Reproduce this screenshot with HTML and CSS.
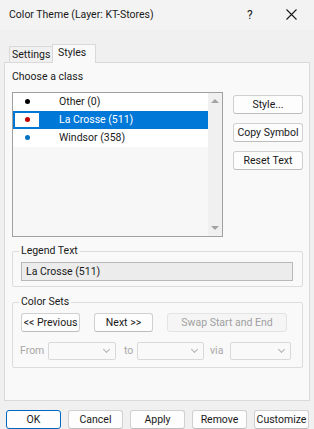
FILE: index.html
```html
<!DOCTYPE html>
<html lang="en">
<head>
    <meta charset="UTF-8">
    <meta name="viewport" content="width=device-width, initial-scale=1.0">
    <title>Color Theme</title>
    <link rel="stylesheet" href="styles.css">
</head>
<body>
    <div class="window">
        <div class="titlebar">
            <span class="title">Color Theme (Layer: KT-Stores)</span>
            <span class="help">?</span>
            <span class="close">
                <svg width="11" height="11" viewBox="0 0 11 11"><path d="M0.5 0.5 L10.5 10.5 M10.5 0.5 L0.5 10.5" stroke="#1a1a1a" stroke-width="1.1"/></svg>
            </span>
        </div>

        <div class="tabs">
            <div class="tab">Settings</div>
            <div class="tab active">Styles</div>
        </div>

        <div class="panel">
            <div class="label">Choose a class</div>
            <div class="class-area">
                <div class="listbox">
                    <div class="rows">
                        <div class="row">
                            <span class="swatch"><span class="dot black"></span></span>
                            <span>Other (0)</span>
                        </div>
                        <div class="row selected">
                            <span class="swatch"><span class="dot red"></span></span>
                            <span>La Crosse (511)</span>
                        </div>
                        <div class="row">
                            <span class="swatch"><span class="dot blue"></span></span>
                            <span>Windsor (358)</span>
                        </div>
                    </div>
                    <div class="scrollbar">
                        <span class="arrow up"></span>
                        <span class="arrow down"></span>
                    </div>
                </div>
                <div class="side-buttons">
                    <button class="btn">Style...</button>
                    <button class="btn">Copy Symbol</button>
                    <button class="btn">Reset Text</button>
                </div>
            </div>

            <div class="group legend-group">
                <span class="group-title">Legend Text</span>
                <input type="text" class="textbox" value="La Crosse (511)" disabled>
            </div>

            <div class="group sets-group">
                <span class="group-title">Color Sets</span>
                <div class="sets-buttons">
                    <button class="btn prev">&lt;&lt; Previous</button>
                    <button class="btn next">Next &gt;&gt;</button>
                    <button class="btn swap" disabled>Swap Start and End</button>
                </div>
                <div class="ramp-row">
                    <span class="muted from">From</span>
                    <span class="combo c1"><span class="chev"></span></span>
                    <span class="muted to">to</span>
                    <span class="combo c2"><span class="chev"></span></span>
                    <span class="muted via">via</span>
                    <span class="combo c3"><span class="chev"></span></span>
                </div>
            </div>
        </div>

        <div class="footer">
            <button class="btn ok">OK</button>
            <button class="btn">Cancel</button>
            <button class="btn">Apply</button>
            <button class="btn">Remove</button>
            <button class="btn">Customize</button>
        </div>
    </div>
</body>
</html>
```

FILE: styles.css
```css
body {
    margin: 0;
    padding: 0;
    background-color: #f0f0f0;
    font-family: Roboto, sans-serif;
    font-size: 10.5px;
    color: #1a1a1a;
}
.window {
    width: 314px;
    height: 429px;
    display: flex;
    flex-direction: column;
    background-color: #f0f0f0;
}
.titlebar {
    height: 30px;
    display: flex;
    align-items: center;
    padding-left: 9px;
    background-color: #f3f3f3;
}
.title {
    flex: 1;
}
.help {
    width: 14px;
    margin-right: 25px;
    font-size: 12px;
}
.close {
    width: 11px;
    height: 11px;
    margin-right: 17px;
    display: flex;
}
.tabs {
    display: flex;
    align-items: flex-end;
    height: 19px;
    margin-top: 13px;
    padding-left: 9px;
}
.tab {
    width: 43px;
    height: 17px;
    line-height: 16px;
    padding-left: 2px;
    box-sizing: border-box;
    border: 1px solid #d9d9d9;
    border-bottom: none;
    border-right: none;
    background-color: #f0f0f0;
    margin-bottom: -1px;
}
.tab.active {
    width: 44px;
    height: 19px;
    line-height: 15px;
    padding-left: 5px;
    border-right: 1px solid #d9d9d9;
    background-color: #f9f9f9;
    position: relative;
    z-index: 1;
}
.panel {
    margin: 0 4px;
    height: 333px;
    border: 1px solid #d9d9d9;
    background-color: #f9f9f9;
    padding: 6px 6px 0 7px;
}
.label {
    line-height: 16px;
    margin-bottom: 7px;
}
.class-area {
    display: flex;
    gap: 10px;
}
.listbox {
    width: 209px;
    height: 143px;
    border: 1px solid #a0a0a0;
    background-color: #f7f7f7;
    display: flex;
}
.rows {
    flex: 1;
}
.row {
    height: 18px;
    display: flex;
    align-items: center;
    background-color: #fff;
    padding-left: 2px;
}
.row.selected {
    background-color: #0078d7;
    color: #fff;
}
.swatch {
    width: 24px;
    height: 14px;
    background-color: #fff;
    display: flex;
    align-items: center;
    justify-content: center;
    margin-right: 20px;
}
.dot {
    width: 5px;
    height: 5px;
    border-radius: 50%;
}
.dot.black { background-color: #000; }
.dot.red { background-color: #c00000; }
.dot.blue { background-color: #0070c0; }
.scrollbar {
    width: 14px;
    background-color: #f0f0f0;
    display: flex;
    flex-direction: column;
    justify-content: space-between;
    align-items: center;
    padding: 6px 0;
}
.arrow {
    width: 0;
    height: 0;
    border-left: 4px solid transparent;
    border-right: 4px solid transparent;
}
.arrow.up { border-bottom: 4px solid #a3a3a3; }
.arrow.down { border-top: 4px solid #a3a3a3; }
.side-buttons {
    display: flex;
    flex-direction: column;
    gap: 9px;
    padding-top: 3px;
}
.btn {
    font-family: Roboto, sans-serif;
    font-size: 10.5px;
    color: #1a1a1a;
    height: 19px;
    padding: 0;
    white-space: nowrap;
    background-color: #fdfdfd;
    border: 1px solid #d0d0d0;
    border-bottom-color: #bdbdbd;
    border-radius: 3px;
}
.side-buttons .btn {
    width: 70px;
}
.group {
    position: relative;
    width: 291px;
    box-sizing: border-box;
    border: 1px solid #dcdcdc;
    border-radius: 2px;
}
.group-title {
    position: absolute;
    top: -9px;
    left: 6px;
    padding: 0 2px;
    background-color: #f9f9f9;
    line-height: 16px;
}
.legend-group {
    margin-top: 14px;
    height: 36px;
    padding: 10px 0 0 8px;
}
.textbox {
    width: 272px;
    height: 19px;
    box-sizing: border-box;
    border: 1px solid #b8b8b8;
    background-color: #ececec;
    font-family: Roboto, sans-serif;
    font-size: 10.5px;
    color: #1a1a1a;
    padding: 0 4px;
    margin: 0;
}
.sets-group {
    margin-top: 15px;
    height: 66px;
    padding: 10px 0 0 8px;
}
.sets-buttons {
    display: flex;
}
.prev { width: 59px; margin-right: 14px; }
.next { width: 59px; margin-right: 14px; }
.swap {
    width: 120px;
    color: #a0a0a0;
    background-color: #f5f5f5;
    border-color: #e3e3e3;
}
.ramp-row {
    display: flex;
    align-items: center;
    margin-top: 10px;
    height: 18px;
}
.muted {
    color: #a8a8a8;
}
.from { width: 28px; margin-left: -1px; }
.to { width: 13px; margin-left: 8px; }
.via { width: 20px; margin-left: 6px; }
.combo {
    height: 18px;
    box-sizing: border-box;
    border: 1px solid #d9d9d9;
    background-color: #f9f9f9;
    border-radius: 2px;
    display: flex;
    align-items: center;
    justify-content: flex-end;
    padding-right: 6px;
}
.chev {
    width: 4px;
    height: 4px;
    border-right: 1px solid #b0b0b0;
    border-bottom: 1px solid #b0b0b0;
    transform: rotate(45deg);
    margin-top: -3px;
}
.c1 { width: 68px; }
.c2 { width: 67px; }
.c3 { width: 61px; }
.footer {
    display: flex;
    gap: 7px;
    padding: 9px 0 0 6px;
}
.footer .btn {
    width: 55px;
}
.footer .btn.ok {
    border: 1px solid #0067c0;
}
```
